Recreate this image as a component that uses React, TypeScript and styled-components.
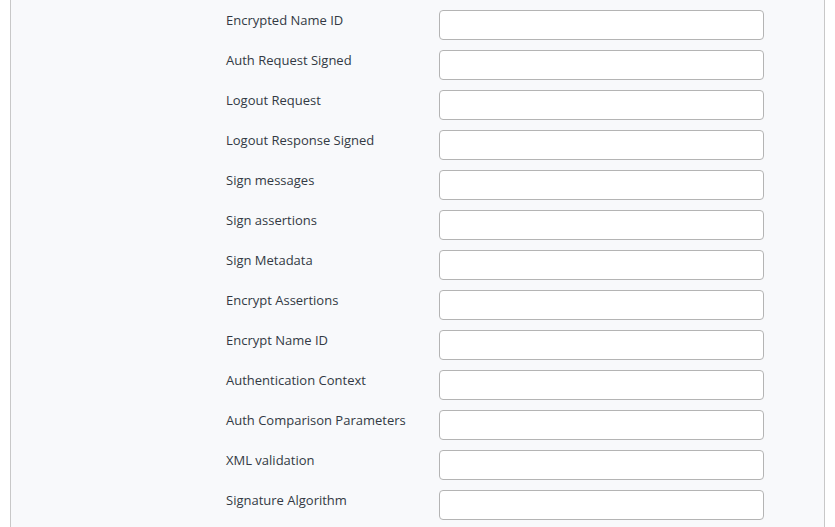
import styled, { createGlobalStyle } from "styled-components";

const GlobalStyle = createGlobalStyle`
    html, body {
        margin: 0;
        padding: 0;
        background: #ffffff;
        font-family: "Open Sans", "Liberation Sans", sans-serif;
    }
`

const Panel = styled.div`
    margin-left: 10px;
    width: 815px;
    min-height: 540px;
    background-color: #f8f9fb;
    border-left: 1px solid #c8c8c8;
    border-right: 1px solid #c8c8c8;
    padding: 10px 0 0 215px;
    box-sizing: border-box;
    display: flex;
    flex-direction: column;
    gap: 10px;
`

const Row = styled.div`
    display: grid;
    grid-template-columns: 213px 325px;
    align-items: start;
`

const Label = styled.label`
    font-size: 13px;
    line-height: 18px;
    color: #333a44;
    padding-top: 1px;
`

const Field = styled.input`
    height: 30px;
    width: 325px;
    box-sizing: border-box;
    background: #ffffff;
    border: 1px solid #b4b4b4;
    border-radius: 4px;
    margin: 0;
    padding: 0 8px;
    font-family: inherit;
    font-size: 13px;
`

const fields = [
    "Encrypted Name ID",
    "Auth Request Signed",
    "Logout Request",
    "Logout Response Signed",
    "Sign messages",
    "Sign assertions",
    "Sign Metadata",
    "Encrypt Assertions",
    "Encrypt Name ID",
    "Authentication Context",
    "Auth Comparison Parameters",
    "XML validation",
    "Signature Algorithm",
]

export default function App() {
    return (
        <>
            <GlobalStyle />
            <Panel>
                {fields.map((name) => (
                    <Row key={name}>
                        <Label>{name}</Label>
                        <Field type="text" />
                    </Row>
                ))}
            </Panel>
        </>
    )
}
